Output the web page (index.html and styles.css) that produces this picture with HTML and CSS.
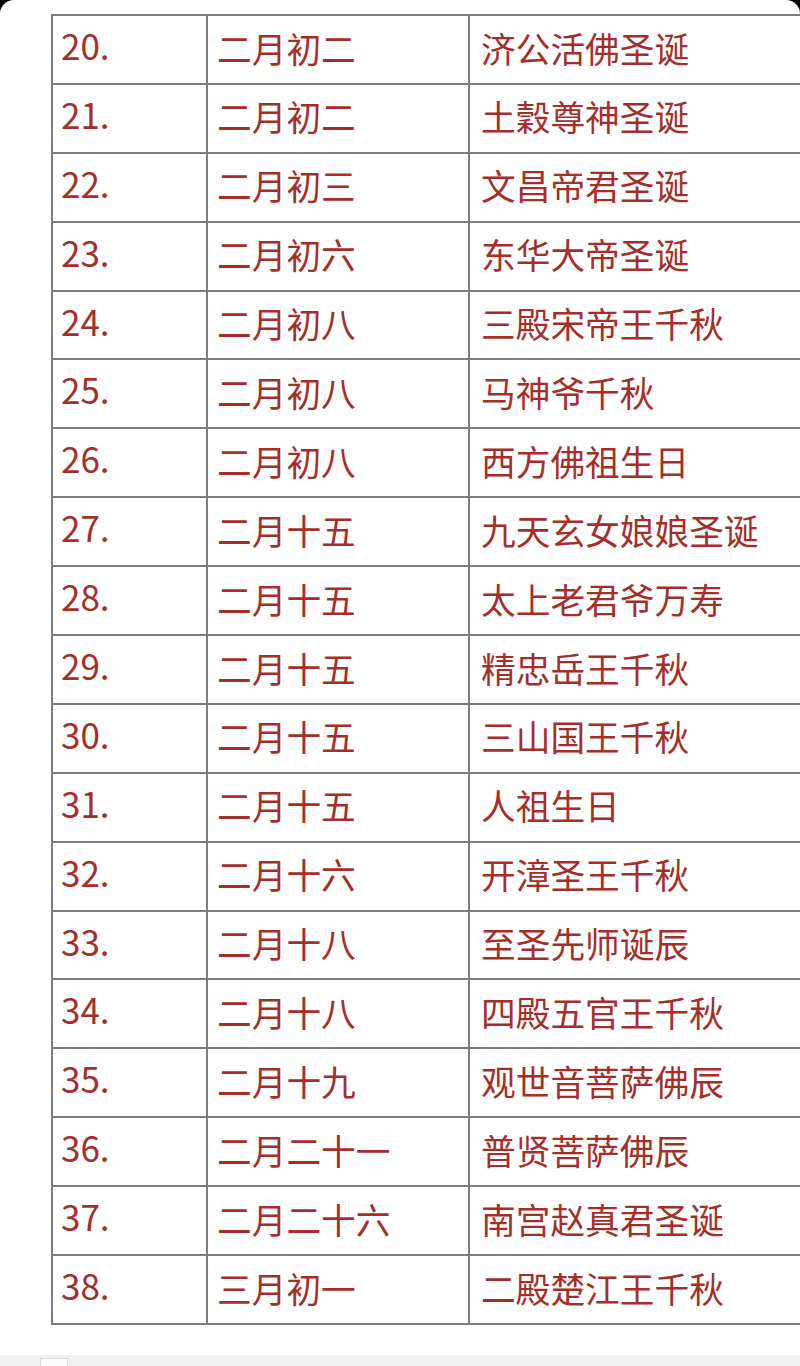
FILE: index.html
```html
<!DOCTYPE html>
<html lang="zh">
<head>
<meta charset="utf-8">
<title>神诞表</title>
<link rel="stylesheet" href="styles.css">
</head>
<body>
<div class="page">
  <div class="table">
    <div class="c num">20.</div><div class="c date">二月初二</div><div class="c name">济公活佛圣诞</div>
    <div class="c num">21.</div><div class="c date">二月初二</div><div class="c name">土穀尊神圣诞</div>
    <div class="c num">22.</div><div class="c date">二月初三</div><div class="c name">文昌帝君圣诞</div>
    <div class="c num">23.</div><div class="c date">二月初六</div><div class="c name">东华大帝圣诞</div>
    <div class="c num">24.</div><div class="c date">二月初八</div><div class="c name">三殿宋帝王千秋</div>
    <div class="c num">25.</div><div class="c date">二月初八</div><div class="c name">马神爷千秋</div>
    <div class="c num">26.</div><div class="c date">二月初八</div><div class="c name">西方佛祖生日</div>
    <div class="c num">27.</div><div class="c date">二月十五</div><div class="c name">九天玄女娘娘圣诞</div>
    <div class="c num">28.</div><div class="c date">二月十五</div><div class="c name">太上老君爷万寿</div>
    <div class="c num">29.</div><div class="c date">二月十五</div><div class="c name">精忠岳王千秋</div>
    <div class="c num">30.</div><div class="c date">二月十五</div><div class="c name">三山国王千秋</div>
    <div class="c num">31.</div><div class="c date">二月十五</div><div class="c name">人祖生日</div>
    <div class="c num">32.</div><div class="c date">二月十六</div><div class="c name">开漳圣王千秋</div>
    <div class="c num">33.</div><div class="c date">二月十八</div><div class="c name">至圣先师诞辰</div>
    <div class="c num">34.</div><div class="c date">二月十八</div><div class="c name">四殿五官王千秋</div>
    <div class="c num">35.</div><div class="c date">二月十九</div><div class="c name">观世音菩萨佛辰</div>
    <div class="c num">36.</div><div class="c date">二月二十一</div><div class="c name">普贤菩萨佛辰</div>
    <div class="c num">37.</div><div class="c date">二月二十六</div><div class="c name">南宫赵真君圣诞</div>
    <div class="c num">38.</div><div class="c date">三月初一</div><div class="c name">二殿楚江王千秋</div>
  </div>
  <div class="bottom"><div class="tab"></div></div>
</div>
</body>
</html>
```

FILE: styles.css
```css
html, body {
  margin: 0;
  padding: 0;
  background: #000;
}
body {
  width: 800px;
  height: 1366px;
  overflow: hidden;
}
.page {
  background: #fff;
  height: 1366px;
  border-radius: 14px 14px 0 0;
  display: flex;
  flex-direction: column;
  overflow: hidden;
}
.table {
  margin: 14px 0 0 51px;
  width: 760px;
  display: grid;
  grid-template-columns: 155px 262px 1fr;
  grid-auto-rows: 68.9px;
  border-top: 2px solid #7d7d7d;
  border-left: 2px solid #7d7d7d;
}
.c {
  box-sizing: border-box;
  border-bottom: 2px solid #7d7d7d;
  color: #a52e29;
  font-family: "Noto Sans CJK SC", "Noto Sans", sans-serif;
  line-height: 1;
  white-space: nowrap;
}
.num {
  border-right: 2px solid #7d7d7d;
  font-size: 35px;
  padding: 11px 0 0 8px;
}
.date {
  border-right: 2px solid #7d7d7d;
  font-size: 34.7px;
  padding: 14.5px 0 0 9px;
}
.name {
  font-size: 34.7px;
  padding: 14.5px 0 0 11px;
}
.bottom {
  margin-top: 30px;
  flex: 1;
  background: #f1f1f1;
  position: relative;
}
.tab {
  margin: 3px 0 0 40px;
  width: 26px;
  height: 12px;
  background: #fafafa;
  border: 1px solid #dcdcdc;
  border-bottom: none;
}
```
